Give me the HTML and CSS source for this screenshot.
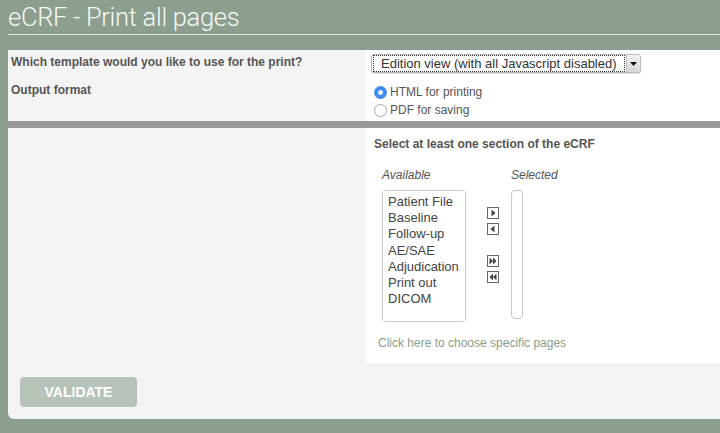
FILE: index.html
```html
<!DOCTYPE html>
<html lang="en">
<head>
<meta charset="utf-8">
<title>eCRF - Print all pages</title>
<link rel="stylesheet" href="styles.css">
</head>
<body>
<header class="page-head">
  <h1 class="page-title">eCRF - Print all pages</h1>
</header>

<main class="panel">
  <section class="options">
    <div class="labels">
      <div class="label label-template">Which template would you like to use for the print?</div>
      <div class="label label-format">Output format</div>
    </div>
    <div class="controls">
      <div class="select">
        <span class="select-value">Edition view (with all Javascript disabled)</span>
        <span class="select-arrow">
          <svg width="7" height="4" viewBox="0 0 7 4"><path d="M0 0h7L3.5 4z" fill="#111"/></svg>
        </span>
      </div>
      <div class="radios">
        <label class="radio"><span class="radio-dot is-checked"></span>HTML for printing</label>
        <label class="radio"><span class="radio-dot"></span>PDF for saving</label>
      </div>
    </div>
  </section>

  <div class="divider"></div>

  <section class="sections">
    <div class="sections-side"></div>
    <div class="sections-body">
      <div class="label">Select at least one section of the eCRF</div>
      <div class="picker">
        <div class="picker-col">
          <div class="picker-caption">Available</div>
          <ul class="listbox listbox-available">
            <li>Patient File</li>
            <li>Baseline</li>
            <li>Follow-up</li>
            <li>AE/SAE</li>
            <li>Adjudication</li>
            <li>Print out</li>
            <li>DICOM</li>
          </ul>
        </div>
        <div class="movers">
          <div class="mover-pair">
            <span class="mover"><svg width="10" height="10" viewBox="0 0 10 10"><path d="M3.5 1.5v7l4-3.5z" fill="#444"/></svg></span>
            <span class="mover"><svg width="10" height="10" viewBox="0 0 10 10"><path d="M6.5 1.5v7l-4-3.5z" fill="#444"/></svg></span>
          </div>
          <div class="mover-pair">
            <span class="mover"><svg width="10" height="10" viewBox="0 0 10 10"><path d="M1.5 1.5v7l3.5-3.5zM5 1.5v7l3.5-3.5z" fill="#444"/></svg></span>
            <span class="mover"><svg width="10" height="10" viewBox="0 0 10 10"><path d="M8.5 1.5v7l-3.5-3.5zM5 1.5v7l-3.5-3.5z" fill="#444"/></svg></span>
          </div>
        </div>
        <div class="picker-col">
          <div class="picker-caption">Selected</div>
          <ul class="listbox listbox-selected"></ul>
        </div>
      </div>
      <a class="pages-link" href="#">Click here to choose specific pages</a>
    </div>
  </section>

  <footer class="actions">
    <button class="btn-validate" type="button">VALIDATE</button>
  </footer>
</main>
</body>
</html>
```

FILE: styles.css
```css
html, body {
  margin: 0;
  padding: 0;
}

body {
  background: #8c9e8e;
  font-family: "Liberation Sans", Arial, sans-serif;
  color: #555;
  height: 433px;
  overflow: hidden;
}

.page-head {
  margin-left: 8px;
  border-bottom: 1px solid #dfe4df;
}

.page-title {
  margin: 0;
  font-family: Roboto, "Liberation Sans", sans-serif;
  font-weight: 300;
  font-size: 25.5px;
  line-height: 34px;
  color: #f7f7f7;
  letter-spacing: -0.3px;
}

.panel {
  margin: 15px 0 0 8px;
  height: 369px;
  background: #f4f4f4;
  border-radius: 0 0 0 6px;
  display: flex;
  flex-direction: column;
}

.label {
  font-weight: bold;
  font-size: 12px;
  line-height: 14px;
  color: #555;
}

/* template + output format */
.options {
  display: grid;
  grid-template-columns: 358px 1fr;
  height: 71px;
}

.labels {
  padding: 5px 0 0 3px;
}

.label-format {
  margin-top: 14px;
}

.controls {
  background: #fff;
  padding: 4px 0 0 5px;
}

.select {
  display: flex;
  align-items: center;
  width: 268px;
  height: 17px;
  border: 1px solid #b9b9b9;
  border-radius: 3px;
  background: #fff;
  box-shadow: 0 1px 1px rgba(0, 0, 0, 0.12);
}

.select-value {
  margin-left: 1px;
  padding: 0 7px 0 7px;
  height: 15px;
  line-height: 15px;
  font-size: 13px;
  color: #333;
  border: 1px dotted #333;
  white-space: nowrap;
}

.select-arrow {
  margin-left: auto;
  width: 13px;
  height: 17px;
  display: flex;
  align-items: center;
  justify-content: center;
  background: linear-gradient(#f4f4f4, #d6d6d6);
  border-left: 1px solid #c4c4c4;
  border-radius: 0 3px 3px 0;
}

.radios {
  margin-top: 10px;
  display: flex;
  flex-direction: column;
}

.radio {
  display: flex;
  align-items: center;
  height: 18px;
  font-size: 12px;
  color: #555;
}

.radio-dot {
  box-sizing: border-box;
  width: 13px;
  height: 13px;
  margin: 0 3px 0 3px;
  border-radius: 50%;
  border: 1px solid #a8a8a8;
  background: #fff;
}

.radio-dot.is-checked {
  border: none;
  background: radial-gradient(circle, #fff 0 2px, #3d8ef0 2.5px);
}

.divider {
  height: 7px;
  background: #999;
}

/* section picker */
.sections {
  display: grid;
  grid-template-columns: 358px 1fr;
  height: 235px;
}

.sections-body {
  background: #fff;
  padding: 9px 0 0 8px;
}

.picker {
  display: flex;
  margin-top: 17px;
  padding-left: 8px;
}

.picker-caption {
  font-style: italic;
  font-size: 12px;
  line-height: 14px;
  color: #555;
}

.listbox {
  list-style: none;
  margin: 8px 0 0 0;
  padding: 3px 0 0 5px;
  border: 1px solid #c8c8c8;
  border-radius: 4px;
  background: #fff;
  font-size: 13px;
  line-height: 16.2px;
  color: #444;
}

.listbox-available {
  width: 77px;
  height: 127px;
}

.listbox-selected {
  width: 5px;
  height: 124px;
}

.movers {
  display: flex;
  flex-direction: column;
  gap: 20px;
  margin: 39px 12px 0 21px;
}

.mover-pair {
  display: flex;
  flex-direction: column;
  gap: 4px;
}

.mover {
  box-sizing: border-box;
  width: 12px;
  height: 12px;
  border: 1px solid #666;
  display: flex;
  align-items: center;
  justify-content: center;
  background: #fff;
}

.pages-link {
  display: inline-block;
  margin: 14px 0 0 4px;
  font-size: 12px;
  color: #8a9d8c;
  text-decoration: none;
}

/* bottom action */
.actions {
  padding: 14px 0 0 12px;
}

.btn-validate {
  width: 117px;
  height: 30px;
  border: none;
  border-radius: 4px;
  background: #b7c3b9;
  color: #fff;
  font-family: "Liberation Sans", Arial, sans-serif;
  font-weight: bold;
  font-size: 14px;
  padding: 0;
}
```
